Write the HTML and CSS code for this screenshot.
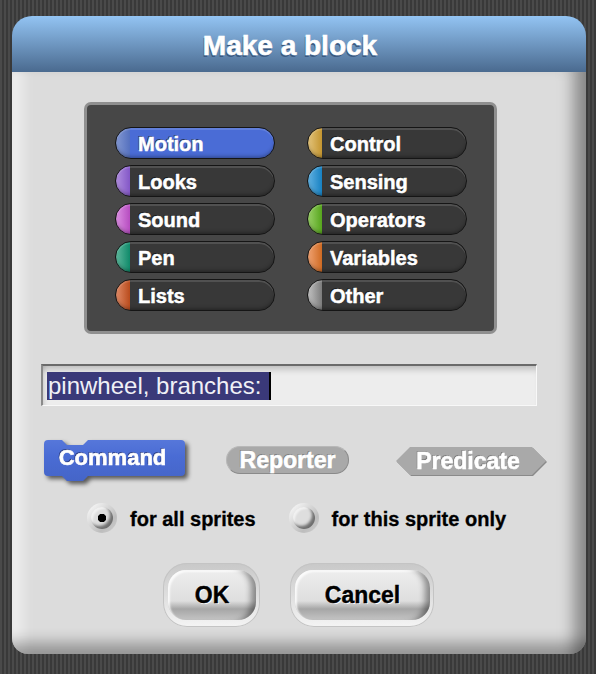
FILE: index.html
```html
<!DOCTYPE html>
<html>
<head>
<meta charset="utf-8">
<link rel="stylesheet" href="styles.css">
</head>
<body>
<div class="dialog">
  <div class="titlebar">Make a block</div>
  <div class="content">
    <div class="palette">
      <div class="cat motion selected">Motion</div>
      <div class="cat control">Control</div>
      <div class="cat looks">Looks</div>
      <div class="cat sensing">Sensing</div>
      <div class="cat sound">Sound</div>
      <div class="cat operators">Operators</div>
      <div class="cat pen">Pen</div>
      <div class="cat variables">Variables</div>
      <div class="cat lists">Lists</div>
      <div class="cat other">Other</div>
    </div>
    <div class="field"><span class="selection">pinwheel, branches: </span><span class="caret"></span></div>
    <div class="types">
      <div class="cmd-wrap"><div class="cmd">Command</div></div>
      <div class="rep">Reporter</div>
      <div class="pred-wrap"><div class="pred">Predicate</div></div>
    </div>
    <div class="radios">
      <span class="radio on"></span><span class="radio-label">for all sprites</span>
      <span class="radio"></span><span class="radio-label">for this sprite only</span>
    </div>
    <div class="buttons">
      <div class="ring ok"><div class="btn">OK</div></div>
      <div class="ring cancel"><div class="btn">Cancel</div></div>
    </div>
  </div>
</div>
</body>
</html>
```
FILE: styles.css
```css
html, body {
  margin: 0;
  height: 100%;
}
body {
  background: repeating-linear-gradient(90deg, #4a4a4a 0 2px, #393939 2px 4px);
  font-family: "Liberation Sans", Arial, sans-serif;
  overflow: hidden;
}
.dialog {
  margin: 16px 0 0 12px;
  width: 574px;
  height: 638px;
  border-radius: 20px 20px 16px 16px;
  overflow: hidden;
  display: flex;
  flex-direction: column;
}
.titlebar {
  height: 56px;
  flex: none;
  background: linear-gradient(#93c4f3, #4a6a8f);
  color: #fff;
  font-weight: bold;
  font-size: 28px;
  line-height: 60px;
  text-align: center;
  padding-right: 18px;
  -webkit-text-stroke: 0.6px #fff;
  text-shadow: -1px 2px 0 #3a5a82;
}
.content {
  flex: 1;
  background: #dcdcdc;
  box-shadow:
    inset -22px 0 16px -10px rgba(0, 0, 0, 0.38),
    inset 0 -22px 14px -10px rgba(0, 0, 0, 0.3),
    inset 20px 0 14px -10px rgba(255, 255, 255, 0.55);
  display: flex;
  flex-direction: column;
  align-items: flex-start;
}
.palette {
  margin: 30px 0 0 72px;
  width: 413px;
  box-sizing: border-box;
  border: 3px solid #8f8f8f;
  border-radius: 7px;
  background: #474747;
  padding: 22px 27px 20px 28px;
  display: grid;
  grid-template-columns: 160px 160px;
  column-gap: 32px;
  row-gap: 6px;
}
.cat {
  height: 32px;
  box-sizing: border-box;
  border: 1px solid #151515;
  border-radius: 16px;
  padding-left: 22px;
  color: #fff;
  font-weight: bold;
  font-size: 20px;
  line-height: 32px;
  -webkit-text-stroke: 0.5px #fff;
  text-shadow: -1px -1px 0 rgba(0, 0, 0, 0.55);
  background: linear-gradient(to right, var(--l) 0, var(--d) 14px, #383838 14px);
  box-shadow: inset 0 2px 0 0 rgba(255, 255, 255, 0.13), inset 0 -3px 4px -2px rgba(0, 0, 0, 0.4);
}
.cat.selected {
  background: linear-gradient(to right, var(--l) 0, var(--d) 14px, #4a6cd6 14px);
}
.motion { --l: #8398d2; --d: #5571bf; }
.looks { --l: #b18fdf; --d: #8357c7; }
.sound { --l: #dc90e2; --d: #b64cc0; }
.pen { --l: #5fb89d; --d: #0f8a6a; }
.lists { --l: #e18c68; --d: #b94b1c; }
.control { --l: #e3c47c; --d: #c4952f; }
.sensing { --l: #62b2e2; --d: #1781c2; }
.operators { --l: #99d068; --d: #56a51c; }
.variables { --l: #f0a272; --d: #cf6a22; }
.other { --l: #c2c2c2; --d: #7c7c7c; }

.field {
  margin: 30px 0 0 29px;
  width: 496px;
  height: 42px;
  box-sizing: border-box;
  background: #ededed;
  border-top: 2px solid #6a6a6a;
  border-left: 2px solid #8a8a8a;
  border-right: 1px solid #f8f8f8;
  border-bottom: 1px solid #f8f8f8;
  box-shadow: inset 0 8px 7px -5px rgba(0, 0, 0, 0.22), inset 5px 0 5px -4px rgba(0, 0, 0, 0.15);
  padding: 6px 0 0 4px;
  display: flex;
  align-items: flex-start;
  font-size: 24px;
}
.selection {
  background: #3a3979;
  color: #f0f0f6;
  height: 28px;
  line-height: 27px;
  padding: 0 1px 0 1px;
  white-space: pre;
}
.caret {
  width: 2px;
  height: 28px;
  background: #000;
}
.types {
  margin: 34px 0 0 32px;
  display: flex;
  align-items: flex-start;
}
.cmd-wrap {
  filter: drop-shadow(3px 3px 2px rgba(0, 0, 0, 0.6));
}
.cmd {
  width: 141px;
  height: 41px;
  box-sizing: border-box;
  padding-right: 4px;
  clip-path: path('M0,4 Q0,0 4,0 L18,0 L23,5 L39,5 L44,0 L137,0 Q141,0 141,4 L141,32 Q141,36 137,36 L44,36 L39,41 L23,41 L18,36 L4,36 Q0,36 0,32 Z');
  background: linear-gradient(#5677da, #4a6cd4 40%, #4565c8);
  color: #fff;
  font-weight: bold;
  font-size: 22px;
  line-height: 36px;
  text-align: center;
  -webkit-text-stroke: 0.6px #fff;
  text-shadow: -1px -1px 0 rgba(20, 30, 80, 0.6);
}
.rep {
  margin: 6px 0 0 41px;
  width: 123px;
  height: 28px;
  box-sizing: border-box;
  border-radius: 14px;
  background: #a9a9a9;
  border: 1px solid #8a8a8a;
  border-top-color: #b8b8b8;
  border-left-color: #b8b8b8;
  color: #fff;
  font-weight: bold;
  font-size: 23px;
  line-height: 27px;
  text-align: center;
  -webkit-text-stroke: 0.6px #fff;
  text-shadow: -1px -1px 0 #7c7c7c;
}
.pred-wrap {
  margin: 7px 0 0 47px;
  filter: drop-shadow(1px 1px 0 #8a8a8a);
}
.pred {
  width: 150px;
  height: 28px;
  box-sizing: border-box;
  padding-right: 6px;
  clip-path: polygon(14px 0, 136px 0, 150px 14px, 136px 28px, 14px 28px, 0 14px);
  background: #a9a9a9;
  color: #fff;
  font-weight: bold;
  font-size: 23px;
  line-height: 28px;
  text-align: center;
  -webkit-text-stroke: 0.6px #fff;
  text-shadow: -1px -1px 0 #7c7c7c;
}
.radios {
  margin: 22px 0 0 75px;
  display: flex;
  align-items: center;
}
.radio {
  width: 30px;
  height: 30px;
  box-sizing: border-box;
  border-radius: 50%;
  padding: 4px;
  background: linear-gradient(135deg, #ffffff, #bdbdbd 70%, #d0d0d0);
  display: flex;
  align-items: center;
  justify-content: center;
}
.radio::before {
  content: "";
  width: 22px;
  height: 22px;
  border-radius: 50%;
  background: #dedede;
  box-shadow: inset -3px -3px 3px rgba(0, 0, 0, 0.5), inset 2px 2px 2px rgba(255, 255, 255, 0.6);
}
.radio.on::before {
  background: radial-gradient(circle, #000 0 4px, #dedede 4.5px);
}
.radio-label {
  margin-left: 13px;
  padding-top: 3px;
  font-weight: bold;
  font-size: 20px;
  color: #000;
  -webkit-text-stroke: 0.3px #000;
}
.radio-label + .radio {
  margin-left: 33px;
}
.buttons {
  margin: 30px 0 0 151px;
  display: flex;
  gap: 30px;
}
.ring {
  height: 64px;
  box-sizing: border-box;
  padding: 7px 4px 7px 5px;
  border-radius: 24px;
  background: linear-gradient(#c8c8c8, #f4f4f4);
  box-shadow: inset 0 0 0 1px #c4c4c4;
}
.ring.ok { width: 97px; }
.ring.cancel { width: 144px; }
.btn {
  height: 100%;
  border-radius: 18px;
  background: linear-gradient(#eeeeee, #dedede 62%, #a6a6a6 78%, #c4c4c4);
  box-shadow: inset -10px 0 6px -5px rgba(0, 0, 0, 0.4), inset 2px 2px 2px rgba(255, 255, 255, 0.8);
  display: flex;
  align-items: center;
  justify-content: center;
  box-sizing: border-box;
  padding-top: 1px;
  font-weight: bold;
  font-size: 23px;
  color: #000;
  -webkit-text-stroke: 0.4px #000;
  text-shadow: 1px 1px 0 #fff;
}
```
